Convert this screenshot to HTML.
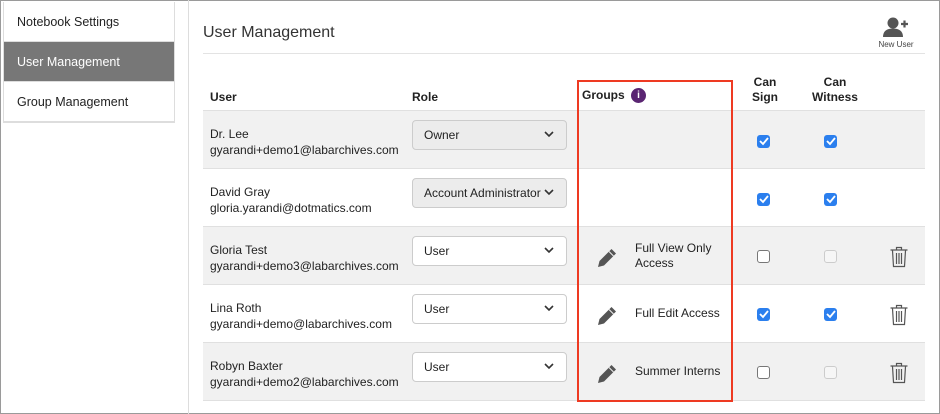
<!DOCTYPE html>
<html><head><style>
*{box-sizing:border-box;margin:0;padding:0}
body{width:940px;height:414px;background:#fff;font-family:"Liberation Sans",Arial,sans-serif;color:#222;position:relative;overflow:hidden}
.frame{position:absolute;left:0;top:0;width:940px;height:414px;border:1px solid #9a9a9a}
.side{position:absolute;left:3px;top:2px;width:172px;height:121px;border:1px solid #ddd;border-top:none}
.side div{height:40px;line-height:40px;padding-left:13px;font-size:12.5px;border-bottom:1px solid #ddd}
.side .act{background:#777;color:#fff}
.vline{position:absolute;left:188px;top:0;width:1px;height:414px;background:#ddd}
.title{position:absolute;left:203px;top:24px;font-size:16px;color:#333}
.hr{position:absolute;left:203px;top:53px;width:722px;height:1px;background:#e3e3e3}
.nu{position:absolute;left:872px;top:16px;width:48px;text-align:center;font-size:8px;color:#444;line-height:9px}
.th{position:absolute;font-size:12px;font-weight:bold;color:#222}
.row{position:absolute;left:203px;width:722px;height:58px;border-top:1px solid #e0e0e0}
.g{background:#f1f1f1}
.u{position:absolute;left:7px;top:15px;font-size:12px;line-height:16px;color:#222}
.sel{position:absolute;left:209px;top:9px;width:155px;height:30px;border:1px solid #ccc;border-radius:4px;background:#fff;font-size:12px;line-height:28px;padding-left:11px;overflow:hidden;white-space:nowrap}
.sel.d{background:#ececec}
.sel span{display:block;width:118px;overflow:hidden}
.sel svg{position:absolute;right:12px;top:10px}
.cb{position:absolute;width:13px;height:13px;border-radius:3px}
.on{background:#2b7fee}
.off{border:1px solid #777;background:#fff}
.dis{border:1px solid #ccc;background:#f6f6f6}
.grp{position:absolute;left:432px;font-size:12px;line-height:15px;color:#222}
.red{position:absolute;left:577px;top:80px;width:156px;height:322px;border:2px solid #ee3a22}
</style></head><body>
<div class="frame"></div>
<div class="side"><div>Notebook Settings</div><div class="act">User Management</div><div>Group Management</div></div>
<div class="vline"></div>
<div class="title">User Management</div>
<div class="hr"></div>
<div class="nu"><svg width="28" height="22" viewBox="0 0 28 22"><circle cx="11" cy="7" r="5.5" fill="#555"/><path d="M1 21c0-6 4-8.5 10-8.5s10 2.5 10 8.5z" fill="#555"/><path d="M19 8h7M22.5 4.5v7" stroke="#555" stroke-width="2.2"/></svg><br>New User</div>
<div class="th" style="left:210px;top:90px">User</div>
<div class="th" style="left:412px;top:90px">Role</div>
<div class="th" style="left:582px;top:88px">Groups <span style="display:inline-block;width:15px;height:15px;border-radius:50%;background:#5a2572;color:#fff;font-size:10px;text-align:center;line-height:15px;vertical-align:middle;margin-left:3px">i</span></div>
<div class="th" style="left:740px;top:75px;width:50px;text-align:center;line-height:15px">Can<br>Sign</div>
<div class="th" style="left:805px;top:75px;width:60px;text-align:center;line-height:15px">Can<br>Witness</div>

<div class="row g" style="top:110px"><div class="u">Dr. Lee<br>gyarandi+demo1@labarchives.com</div><div class="sel d"><span>Owner</span><svg width="10" height="7"><path d="M1 1l4 4 4-4" stroke="#333" stroke-width="1.6" fill="none"/></svg></div>
<div class="cb on" style="left:554px;top:24px"></div><div class="cb on" style="left:621px;top:24px"></div></div>
<div class="row" style="top:168px"><div class="u">David Gray<br>gloria.yarandi@dotmatics.com</div><div class="sel d"><span>Account Administrator</span><svg width="10" height="7"><path d="M1 1l4 4 4-4" stroke="#333" stroke-width="1.6" fill="none"/></svg></div>
<div class="cb on" style="left:554px;top:24px"></div><div class="cb on" style="left:621px;top:24px"></div></div>
<div class="row g" style="top:226px"><div class="u">Gloria Test<br>gyarandi+demo3@labarchives.com</div><div class="sel"><span>User</span><svg width="10" height="7"><path d="M1 1l4 4 4-4" stroke="#333" stroke-width="1.6" fill="none"/></svg></div>
<div class="grp" style="top:14px">Full View Only<br>Access</div>
<div class="cb off" style="left:554px;top:23px"></div><div class="cb dis" style="left:621px;top:23px"></div></div>
<div class="row" style="top:284px"><div class="u">Lina Roth<br>gyarandi+demo@labarchives.com</div><div class="sel"><span>User</span><svg width="10" height="7"><path d="M1 1l4 4 4-4" stroke="#333" stroke-width="1.6" fill="none"/></svg></div>
<div class="grp" style="top:21px">Full Edit Access</div>
<div class="cb on" style="left:554px;top:23px"></div><div class="cb on" style="left:621px;top:23px"></div></div>
<div class="row g" style="top:342px;border-bottom:1px solid #e0e0e0;height:59px"><div class="u">Robyn Baxter<br>gyarandi+demo2@labarchives.com</div><div class="sel"><span>User</span><svg width="10" height="7"><path d="M1 1l4 4 4-4" stroke="#333" stroke-width="1.6" fill="none"/></svg></div>
<div class="grp" style="top:21px">Summer Interns</div>
<div class="cb off" style="left:554px;top:23px"></div><div class="cb dis" style="left:621px;top:23px"></div></div>

<svg style="position:absolute;left:0;top:0" width="940" height="414">
<defs><g id="pen"><path d="M0 20l1.5-6 12-12 4.5 4.5-12 12z" fill="#555"/><path d="M11 4.5l4.5 4.5" stroke="#f1f1f1" stroke-width="1"/></g>
<g id="tr" fill="none" stroke="#555" stroke-width="1.2"><path d="M0.5 4h17M6.5 4V1.5h5V4M2.5 4.5l1 16h11l1-16M6.5 7v11M9 7v11M11.5 7v11"/></g>
<g id="ck" fill="none" stroke="#fff" stroke-width="1.8"><path d="M3 7l3 3 5-6"/></g></defs>
<use href="#pen" x="598" y="247"/><use href="#pen" x="598" y="305"/><use href="#pen" x="598" y="363"/>
<use href="#tr" x="890" y="246"/><use href="#tr" x="890" y="304"/><use href="#tr" x="890" y="362"/>
<use href="#ck" x="757" y="134"/><use href="#ck" x="824" y="134"/><use href="#ck" x="757" y="192"/><use href="#ck" x="824" y="192"/><use href="#ck" x="757" y="307"/><use href="#ck" x="824" y="307"/>
</svg>
<div class="red"></div>
</body></html>
